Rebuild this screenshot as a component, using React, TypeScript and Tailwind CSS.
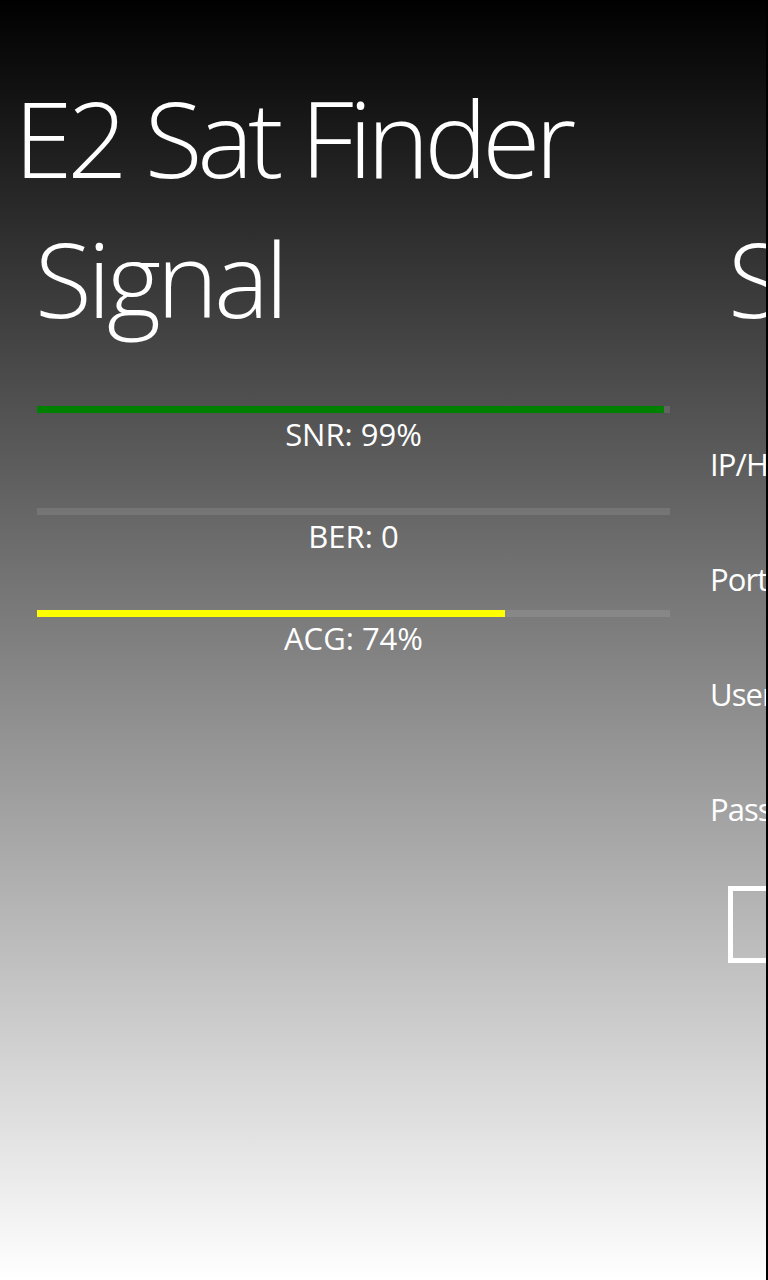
import React from "react";

const bars = [
  { label: "SNR: 99%", value: 99, color: "bg-[#008000]" },
  { label: "BER: 0", value: 0, color: "bg-[#008000]" },
  { label: "ACG: 74%", value: 74, color: "bg-[#ffff00]" },
];

const fields = ["IP/Host", "Port", "Username", "Password"];

export default function App() {
  return (
    <div
      className="relative w-[768px] h-[1280px] overflow-hidden bg-[linear-gradient(to_bottom,#000000,#ffffff)] text-white"
      style={{ fontFamily: '"Open Sans", "Noto Sans", sans-serif' }}
    >
      <div className="flex h-full">
        <div className="flex-1 min-w-0 overflow-hidden">
          <h1 className="pt-[84px] pl-[14px] text-[106px] font-light leading-none whitespace-nowrap tracking-[-0.05em]">
            E2 Sat Finder
          </h1>
          <div className="flex mt-[36px]">
            <section className="ml-[37px] w-[633px] shrink-0">
              <h2 className="text-[104px] font-light leading-none whitespace-nowrap -ml-[2px] tracking-[-0.04em]">
                Signal
              </h2>
              <div className="mt-[76px] flex flex-col">
                {bars.map((b) => (
                  <div key={b.label} className="flex flex-col h-[102px]">
                    <div className="h-[7px] w-full bg-white/10">
                      <div className={`h-full ${b.color}`} style={{ width: `${b.value}%` }} />
                    </div>
                    <div className="text-center text-[31px] leading-[43px]">{b.label}</div>
                  </div>
                ))}
              </div>
            </section>
            <section className="ml-[40px] w-[600px] shrink-0">
              <h2 className="pl-[18px] text-[104px] font-light leading-none whitespace-nowrap tracking-[-0.04em]">
                Settings
              </h2>
              <div className="mt-[113px] flex flex-col">
                {fields.map((f, i) => (
                  <div
                    key={f}
                    className={`text-[31px] leading-[43px] whitespace-nowrap tracking-[-0.03em] ${i < 3 ? "h-[115px]" : ""}`}
                  >
                    {f}
                  </div>
                ))}
                <div className="mt-[55px] ml-[18px] w-[77px] h-[77px] border-[5px] border-white" />
              </div>
            </section>
          </div>
        </div>
        <div className="w-[2px] shrink-0 bg-black" />
      </div>
    </div>
  );
}
